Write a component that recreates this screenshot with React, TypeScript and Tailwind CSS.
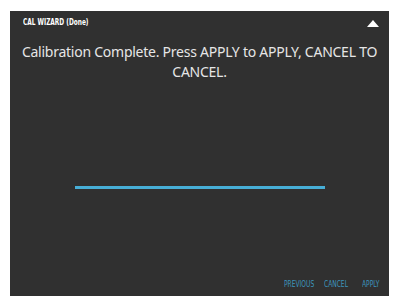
const cond = { fontFamily: '"DejaVu Sans Condensed", "Open Sans", sans-serif' };

function Btn({ label, w, ml }: { label: string; w: string; ml: string }) {
  return (
    <span className={`${w} ${ml} block whitespace-nowrap overflow-visible`}>
      <span className="inline-block scale-x-[0.78] origin-left">{label}</span>
    </span>
  );
}

export default function App() {
  return (
    <div className="w-[400px] h-[298px] bg-white pt-[11px] pl-[10px] pr-[11px] pb-[2px]">
      <div className="h-[285px] bg-[#303030] flex flex-col">
        <div className="flex items-center justify-between h-[24px] pl-[13px] pr-[10px]">
          <span className="inline-block text-[9px] font-bold text-white scale-x-[0.72] origin-left whitespace-nowrap" style={cond}>CAL WIZARD (Done)</span>
          <svg width="12" height="7" viewBox="0 0 12 7"><polygon points="6,0 12,7 0,7" fill="#ffffff" /></svg>
        </div>
        <div className="mt-[7px] text-center text-[14px] leading-[20px] tracking-[-0.25px] text-[#e6e6e6]" style={{ fontFamily: '"Noto Sans", sans-serif' }}>
          Calibration Complete. Press APPLY to APPLY, CANCEL TO CANCEL.
        </div>
        <div className="flex-1 flex items-center justify-center">
          <div className="w-[250px] h-[3px] bg-[#47aed6] mt-[20px]" />
        </div>
        <div className="flex justify-end items-center pr-[9px] h-[24px] text-[8.5px] text-[#3d95bd]" style={cond}>
          <Btn label="PREVIOUS" w="w-[27px]" ml="ml-0" />
          <Btn label="CANCEL" w="w-[21px]" ml="ml-[13px]" />
          <Btn label="APPLY" w="w-[18px]" ml="ml-[17px]" />
        </div>
      </div>
    </div>
  );
}
